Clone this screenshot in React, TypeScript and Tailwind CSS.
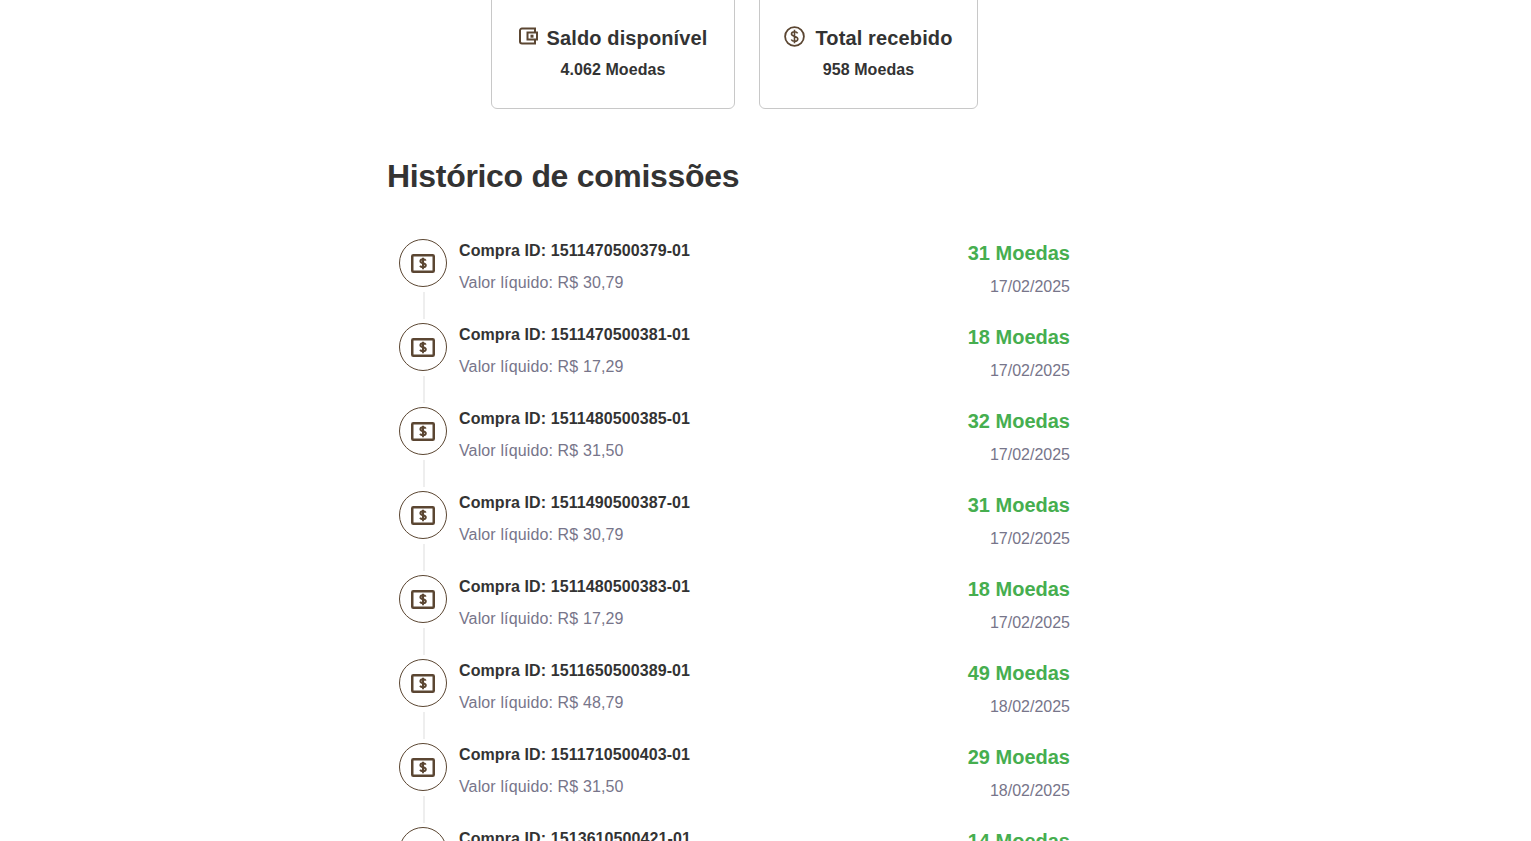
import React from "react";

const rows = [
  { id: "1511470500379-01", net: "30,79", coins: 31, date: "17/02/2025" },
  { id: "1511470500381-01", net: "17,29", coins: 18, date: "17/02/2025" },
  { id: "1511480500385-01", net: "31,50", coins: 32, date: "17/02/2025" },
  { id: "1511490500387-01", net: "30,79", coins: 31, date: "17/02/2025" },
  { id: "1511480500383-01", net: "17,29", coins: 18, date: "17/02/2025" },
  { id: "1511650500389-01", net: "48,79", coins: 49, date: "18/02/2025" },
  { id: "1511710500403-01", net: "31,50", coins: 29, date: "18/02/2025" },
  { id: "1513610500421-01", net: "14,29", coins: 14, date: "18/02/2025" },
];

function WalletIcon() {
  return (
    <svg width="19" height="18" viewBox="0 0 19 18" fill="none" stroke="#5b4632" strokeWidth="2" className="shrink-0">
      <path d="M3 1.5h13v15H3a2 2 0 0 1-2-2v-11a2 2 0 0 1 2-2z" />
      <path d="M8.5 5.5H18v7H8.5z" fill="#fff" />
      <rect x="11.5" y="7.7" width="3" height="3" fill="#5b4632" stroke="none" />
    </svg>
  );
}

function CoinIcon() {
  return (
    <svg width="21" height="21" viewBox="0 0 21 21" fill="none" stroke="#5b4632" className="shrink-0">
      <circle cx="10.5" cy="10.5" r="9.4" strokeWidth="1.8" />
      <path d="M13.6 7.4c-.5-1-1.6-1.6-3.1-1.6-1.8 0-3 .9-3 2.3 0 3.1 6.3 1.6 6.3 4.8 0 1.4-1.3 2.3-3.3 2.3-1.5 0-2.7-.6-3.2-1.7M10.5 3.8v13.4" strokeWidth="1.6" />
    </svg>
  );
}

function BillIcon() {
  return (
    <svg width="24" height="19" viewBox="0 0 24 19" fill="none" className="block">
      <rect x="1.25" y="1.25" width="21.5" height="16.5" stroke="#5b4632" strokeWidth="2.5" rx="1" />
      <path d="M14.7 6.7c-.4-.9-1.3-1.4-2.7-1.4-1.6 0-2.6.7-2.6 1.9 0 2.6 5.4 1.4 5.4 4 0 1.2-1.1 2-2.8 2-1.4 0-2.4-.5-2.9-1.5M12 3.8v11.4" stroke="#5b4632" strokeWidth="2" />
    </svg>
  );
}

export default function App() {
  return (
    <div className="h-[841px] overflow-hidden bg-white font-['Liberation_Sans',Arial,sans-serif] text-[#333]">
      <div className="-mt-[8px] ml-[491px] flex gap-6">
        <div className="flex h-[117px] w-[244px] flex-col items-center rounded-md border border-[#c8c8c8] pt-[32px]">
          <div className="flex h-[26px] items-center gap-[9px] text-[20px] font-bold leading-[26px] tracking-[0.13px]">
            <span className="-mt-1"><WalletIcon /></span>
            <span>Saldo disponível</span>
          </div>
          <div className="mt-[9px] text-base font-bold leading-5 tracking-[0.08px]">4.062 Moedas</div>
        </div>
        <div className="flex h-[117px] w-[219px] flex-col items-center rounded-md border border-[#c8c8c8] pt-[32px]">
          <div className="flex h-[26px] items-center gap-[10px] text-[20px] font-bold leading-[26px] tracking-[0.13px]">
            <span className="-mt-1"><CoinIcon /></span>
            <span>Total recebido</span>
          </div>
          <div className="mt-[9px] text-base font-bold leading-5 tracking-[0.08px]">958 Moedas</div>
        </div>
      </div>

      <div className="ml-[387px] w-[683px]">
        <h1 className="mt-[47px] text-[32px] font-bold leading-10 tracking-[-0.32px]">Histórico de comissões</h1>

        <div className="mt-[43px]">
          {rows.map((r) => (
            <div key={r.id} className="flex h-[84px] items-start pl-3">
              <div className="flex w-12 shrink-0 flex-col items-center">
                <div className="flex size-12 items-center justify-center rounded-full border border-[#5b4632]">
                  <BillIcon />
                </div>
                <div className="ml-[2px] mt-[5px] h-[27px] w-0.5 bg-[#eeeeee]" />
              </div>
              <div className="ml-3 flex-1">
                <div className="text-base font-bold leading-6 tracking-[0.09px]">Compra ID: {r.id}</div>
                <div className="mt-2 text-base leading-6 tracking-[0.13px] text-[#77758a]">Valor líquido: R$ {r.net}</div>
              </div>
              <div className="text-right">
                <div className="text-xl font-bold leading-7 text-[#46ae4f]">{r.coins} Moedas</div>
                <div className="mt-2 text-base leading-6 text-[#77758a]">{r.date}</div>
              </div>
            </div>
          ))}
        </div>
      </div>
    </div>
  );
}
